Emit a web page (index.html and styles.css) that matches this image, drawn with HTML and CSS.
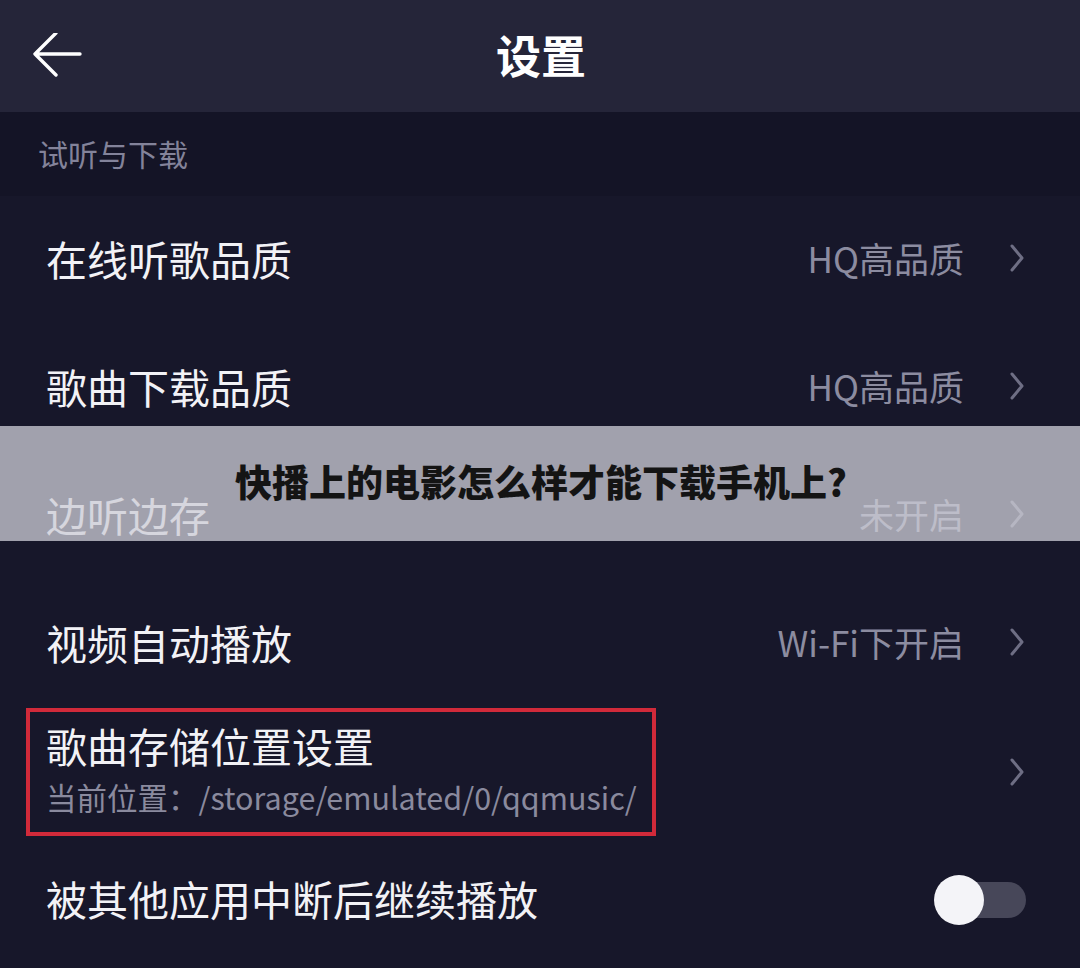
FILE: index.html
```html
<!DOCTYPE html>
<html lang="zh-CN">
<head>
<meta charset="utf-8">
<title>设置</title>
<link rel="stylesheet" href="styles.css">
</head>
<body>
<div class="screen">
  <header class="topbar">
    <svg class="back" width="52" height="48" viewBox="0 0 52 48" aria-hidden="true">
      <path d="M48 21 H3 M24 0 L3 21 L24 42" fill="none" stroke="#ffffff" stroke-width="3.4" stroke-linecap="round" stroke-linejoin="round"/>
    </svg>
    <h1 class="title">设置</h1>
  </header>

  <div class="section-label">试听与下载</div>

  <div class="row">
    <span class="label">在线听歌品质</span>
    <span class="value">HQ高品质</span>
    <svg class="chev" width="18" height="30" viewBox="0 0 18 30"><path d="M4 3 L14 15 L4 27" fill="none" stroke="#6e6e84" stroke-width="3" stroke-linecap="round" stroke-linejoin="round"/></svg>
  </div>

  <div class="row">
    <span class="label">歌曲下载品质</span>
    <span class="value">HQ高品质</span>
    <svg class="chev" width="18" height="30" viewBox="0 0 18 30"><path d="M4 3 L14 15 L4 27" fill="none" stroke="#6e6e84" stroke-width="3" stroke-linecap="round" stroke-linejoin="round"/></svg>
  </div>

  <div class="row">
    <span class="label">边听边存</span>
    <span class="value">未开启</span>
    <svg class="chev" width="18" height="30" viewBox="0 0 18 30"><path d="M4 3 L14 15 L4 27" fill="none" stroke="#6e6e84" stroke-width="3" stroke-linecap="round" stroke-linejoin="round"/></svg>
  </div>

  <div class="row">
    <span class="label">视频自动播放</span>
    <span class="value">Wi-Fi下开启</span>
    <svg class="chev" width="18" height="30" viewBox="0 0 18 30"><path d="M4 3 L14 15 L4 27" fill="none" stroke="#6e6e84" stroke-width="3" stroke-linecap="round" stroke-linejoin="round"/></svg>
  </div>

  <div class="row row-tall">
    <div class="highlight">
      <div class="label">歌曲存储位置设置</div>
      <div class="sub">当前位置：/storage/emulated/0/qqmusic/</div>
    </div>
    <svg class="chev" width="18" height="30" viewBox="0 0 18 30"><path d="M4 3 L14 15 L4 27" fill="none" stroke="#6e6e84" stroke-width="3" stroke-linecap="round" stroke-linejoin="round"/></svg>
  </div>

  <div class="row">
    <span class="label">被其他应用中断后继续播放</span>
    <span class="toggle"><span class="knob"></span></span>
  </div>

  <div class="banner">快播上的电影怎么样才能下载手机上?</div>
</div>
</body>
</html>
```

FILE: styles.css
```css
* { box-sizing: border-box; margin: 0; padding: 0; }

html, body {
  width: 1080px;
  height: 968px;
  overflow: hidden;
  background: #17172a;
}

body {
  font-family: "Noto Sans CJK SC", "Noto Sans", "Liberation Sans", sans-serif;
  color: #f2f2f6;
}

.screen {
  position: relative;
  width: 1080px;
  height: 968px;
  background: #17172a;
}

.topbar {
  height: 112px;
  background: #252539;
  display: flex;
  align-items: center;
  justify-content: center;
  position: relative;
}

.back {
  position: absolute;
  left: 32px;
  top: 33px;
}

.title {
  font-size: 45px;
  font-weight: 700;
  color: #ffffff;
  line-height: 1;
  margin-left: 2px;
  margin-bottom: 3px;
}

.section-label {
  height: 84px;
  display: flex;
  align-items: center;
  padding-left: 38px;
  padding-bottom: 2px;
  font-size: 30px;
  color: #83839a;
  background: #141426;
}

.row {
  height: 128px;
  display: flex;
  align-items: center;
  padding-left: 46px;
  padding-right: 54px;
  padding-bottom: 5px;
}

.label {
  font-size: 41px;
  line-height: 48px;
  color: #f2f2f6;
  flex: 1;
  white-space: nowrap;
}

.value {
  font-size: 35px;
  color: #8c8ca0;
  margin-right: 44px;
  white-space: nowrap;
}

.chev {
  display: block;
  flex: none;
}

.row-tall {
  padding-left: 26px;
  padding-bottom: 0;
}

.highlight {
  width: 630px;
  height: 128px;
  border: 4px solid #d12a3a;
  padding: 9px 0 0 16px;
  margin-right: auto;
  margin-top: -1px;
}

.highlight .label {
  flex: none;
}

.sub {
  margin-top: 10px;
  font-size: 30.5px;
  line-height: 36px;
  color: #8a8a9e;
  white-space: nowrap;
}

.toggle {
  position: relative;
  width: 74px;
  height: 36px;
  border-radius: 18px;
  background: #474759;
  margin-top: 5px;
}

.knob {
  position: absolute;
  left: -18px;
  top: -7px;
  width: 50px;
  height: 50px;
  border-radius: 50%;
  background: #f4f4f8;
}

.banner {
  position: absolute;
  left: 0;
  top: 426px;
  width: 1080px;
  height: 115px;
  background: rgba(205, 205, 214, 0.76);
  display: flex;
  align-items: center;
  justify-content: center;
  padding-bottom: 6px;
  padding-left: 2px;
  font-size: 37px;
  font-weight: 900;
  color: #141414;
}
```
